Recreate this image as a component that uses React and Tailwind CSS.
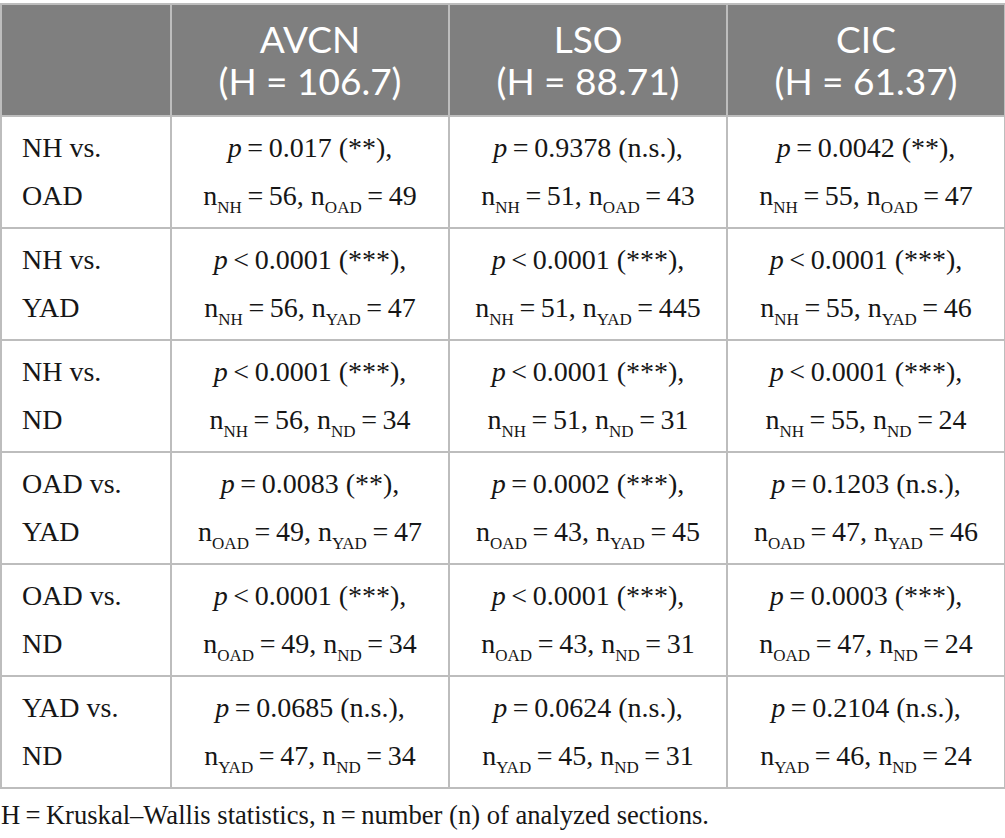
import React from "react";

const serif = { fontFamily: '"Liberation Serif", "Times New Roman", serif' };

function N({ s }) {
  return (
    <span>
      n<sub className="text-[17px]" style={{ verticalAlign: "-4px" }}>{s}</sub>
    </span>
  );
}

function Cell({ p, op = "=", note, a, an, b, bn }) {
  return (
    <td className="border-2 border-[#bdbdbd] text-center align-middle p-0">
      <div className="leading-[48px] text-[28px] text-[#161616] whitespace-nowrap">
        <div>
          <i>p</i>
          <span>{"\u2009" + op + "\u2009"}</span>
          {p} ({note}),
        </div>
        <div>
          <N s={a} />
          {"\u2009=\u2009" + an + ", "}
          <N s={b} />
          {"\u2009=\u2009" + bn}
        </div>
      </div>
    </td>
  );
}

const rows = [
  ["NH vs.", "OAD", [["0.017", "=", "**", "NH", 56, "OAD", 49], ["0.9378", "=", "n.s.", "NH", 51, "OAD", 43], ["0.0042", "=", "**", "NH", 55, "OAD", 47]]],
  ["NH vs.", "YAD", [["0.0001", "<", "***", "NH", 56, "YAD", 47], ["0.0001", "<", "***", "NH", 51, "YAD", 445], ["0.0001", "<", "***", "NH", 55, "YAD", 46]]],
  ["NH vs.", "ND", [["0.0001", "<", "***", "NH", 56, "ND", 34], ["0.0001", "<", "***", "NH", 51, "ND", 31], ["0.0001", "<", "***", "NH", 55, "ND", 24]]],
  ["OAD vs.", "YAD", [["0.0083", "=", "**", "OAD", 49, "YAD", 47], ["0.0002", "=", "***", "OAD", 43, "YAD", 45], ["0.1203", "=", "n.s.", "OAD", 47, "YAD", 46]]],
  ["OAD vs.", "ND", [["0.0001", "<", "***", "OAD", 49, "ND", 34], ["0.0001", "<", "***", "OAD", 43, "ND", 31], ["0.0003", "=", "***", "OAD", 47, "ND", 24]]],
  ["YAD vs.", "ND", [["0.0685", "=", "n.s.", "YAD", 47, "ND", 34], ["0.0624", "=", "n.s.", "YAD", 45, "ND", 31], ["0.2104", "=", "n.s.", "YAD", 46, "ND", 24]]],
];

const heads = [["AVCN", "(H = 106.7)"], ["LSO", "(H = 88.71)"], ["CIC", "(H = 61.37)"]];

export default function App() {
  return (
    <div className="w-[1005px] h-[838px] bg-white overflow-hidden pt-[3px]" style={serif}>
      <table className="border-collapse table-fixed w-[1004px]">
        <colgroup>
          <col className="w-[170px]" />
          <col className="w-[278px]" />
          <col className="w-[278px]" />
          <col className="w-[278px]" />
        </colgroup>
        <thead>
          <tr className="h-[112px] bg-[#7f7f7f]">
            <th className="border-2 border-[#bdbdbd]"></th>
            {heads.map(([a, b]) => (
              <th
                key={a}
                className="border-2 border-[#bdbdbd] text-white font-normal text-[37px] leading-[42px] text-center"
                style={{ fontFamily: 'Lato, "Open Sans", sans-serif' }}
              >
                <div>{a}</div>
                <div>{b}</div>
              </th>
            ))}
          </tr>
        </thead>
        <tbody>
          {rows.map(([l1, l2, cells], i) => (
            <tr key={i} className="h-[112px]">
              <td className="border-2 border-[#bdbdbd] align-middle pl-[20px] p-0">
                <div className="leading-[48px] text-[28px] text-[#161616] whitespace-nowrap">
                  <div>{l1}</div>
                  <div>{l2}</div>
                </div>
              </td>
              {cells.map((c, j) => (
                <Cell key={j} p={c[0]} op={c[1]} note={c[2]} a={c[3]} an={c[4]} b={c[5]} bn={c[6]} />
              ))}
            </tr>
          ))}
        </tbody>
      </table>
      <div className="mt-[10px] text-[26.6px] leading-[32px] text-[#161616] pl-[1px] whitespace-nowrap">
        H{"\u2009=\u2009"}Kruskal–Wallis statistics, n{"\u2009=\u2009"}number (n) of analyzed sections.
      </div>
    </div>
  );
}
